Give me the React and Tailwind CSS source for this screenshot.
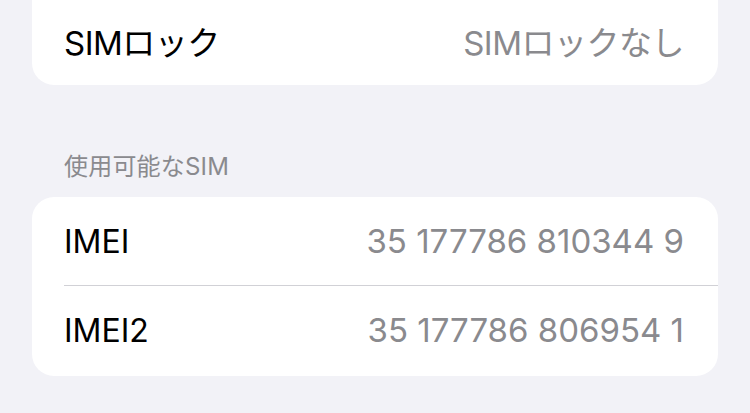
export default function App() {
  const font = { fontFamily: 'Inter, "Noto Sans CJK JP", sans-serif' };
  return (
    <div
      className="w-[750px] h-[413px] overflow-hidden bg-[#f2f2f7] px-8"
      style={font}
    >
      <div className="-mt-[20px] bg-white rounded-[22px]">
        <div className="h-[105px] pt-[23px] flex items-center justify-between pl-8 pr-[34px]">
          <span className="text-[33px] text-black tracking-[-0.5px]">SIMロック</span>
          <span className="text-[33px] text-[#8a8a8e] tracking-[-0.5px]">SIMロックなし</span>
        </div>
      </div>
      <div className="h-[112px] flex items-end pl-8 pb-[12px]">
        <span className="text-[24px] text-[#8a8a8e] tracking-[0.2px]">使用可能なSIM</span>
      </div>
      <div className="bg-white rounded-[22px]">
        <div className="h-[88px] flex items-center justify-between pl-8 pr-[34px] pt-[1px]">
          <span className="text-[32px] text-black">IMEI</span>
          <span className="text-[33px] text-[#8a8a8e]">35 177786 810344 9</span>
        </div>
        <div className="ml-8 h-px bg-[#d1d1d6]"></div>
        <div className="h-[90px] flex items-center justify-between pl-8 pr-[34px]">
          <span className="text-[32px] text-black">IMEI2</span>
          <span className="text-[33px] text-[#8a8a8e]">35 177786 806954 1</span>
        </div>
      </div>
    </div>
  );
}
